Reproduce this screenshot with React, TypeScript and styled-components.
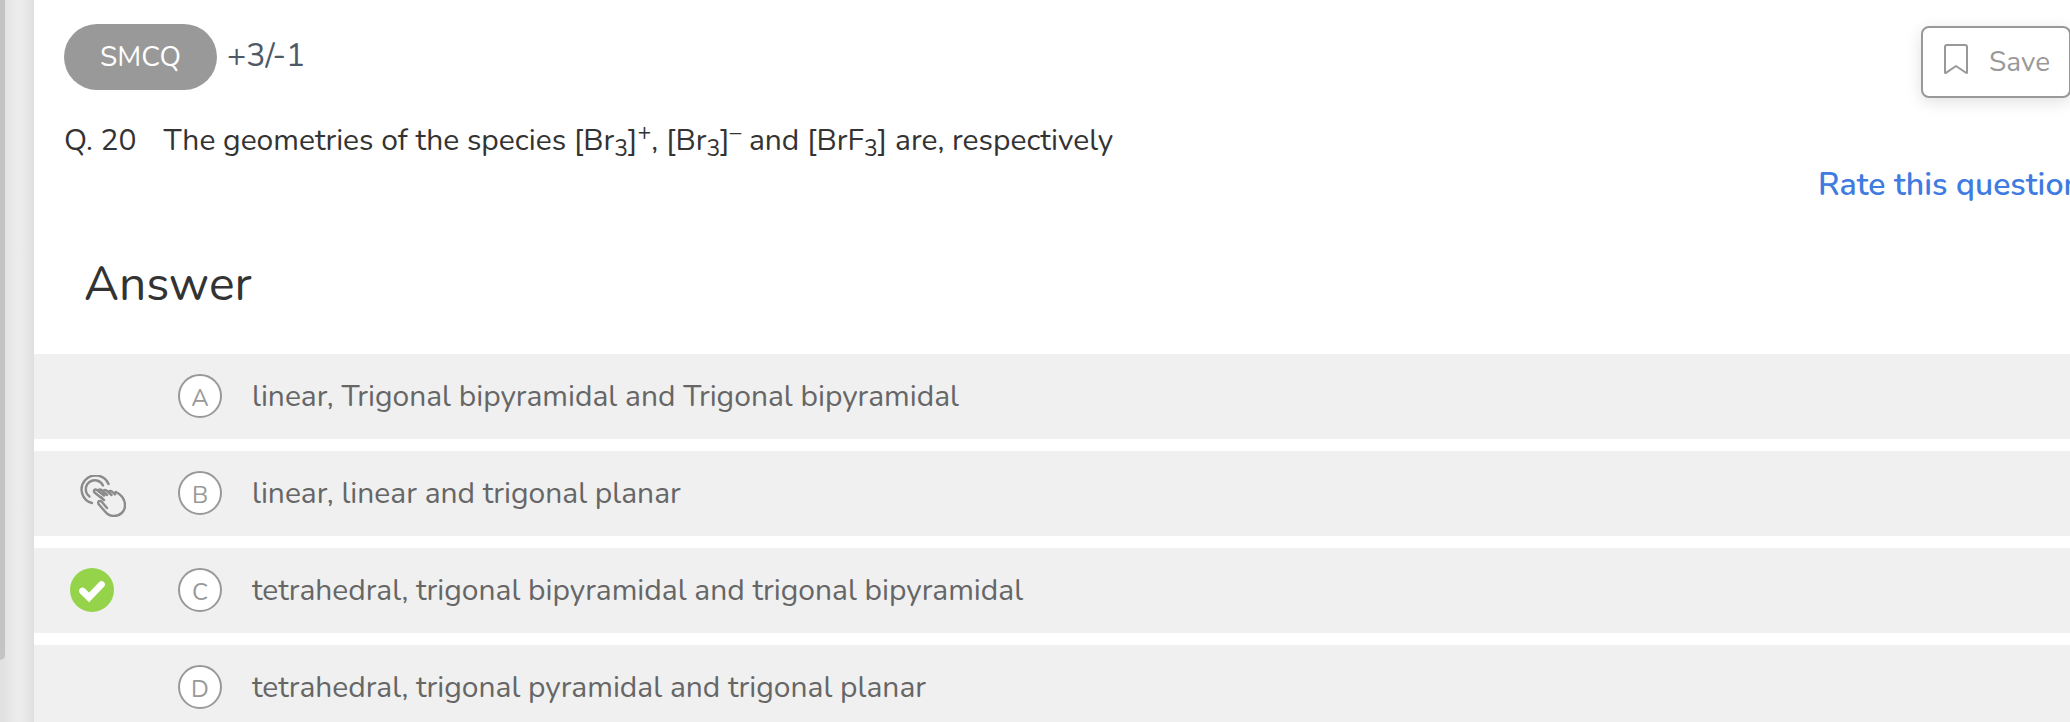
import React from "react";
import styled, { createGlobalStyle } from "styled-components";

const GlobalStyle = createGlobalStyle`
  *, *::before, *::after { box-sizing: border-box; }
  body {
    margin: 0;
    background: #fff;
    color: #333;
    font-family: Nunito, Lato, "Noto Sans", sans-serif;
    font-size: 30px;
    line-height: 40px;
  }
`;

const Page = styled.div`
  display: flex;
  height: 100vh;
  overflow: hidden;
`;

const ScrollTrack = styled.div`
  flex: 0 0 5px;
  background: #e1e1e1;
`;

const ScrollThumb = styled.div`
  height: calc(100% - 62px);
  background: #c4c4c4;
  border-bottom-right-radius: 5px;
`;

const Gutter = styled.div`
  flex: 0 0 29px;
  background: linear-gradient(to right, #e3e3e3, #ececec 45%, #ebebeb 60%, #dfdfdf);
`;

const Panel = styled.main`
  flex: 1;
  min-width: 0;
  overflow: hidden;
`;

const Header = styled.header`
  display: flex;
  justify-content: space-between;
  padding: 24px 0 0 30px;
`;

const Meta = styled.div`
  display: flex;
  align-items: center;
  gap: 10px;
  color: #4d5966;
  font-size: 32px;
`;

const TypePill = styled.span`
  display: flex;
  align-items: center;
  justify-content: center;
  width: 153px;
  height: 66px;
  border-radius: 33px;
  background: #999;
  color: #fff;
  font-size: 28px;
`;

const Marks = styled.span`
  padding-bottom: 2px;
`;

const Question = styled.p`
  display: flex;
  gap: 27px;
  margin: 31px 0 0;

  sub, sup {
    font-size: 23px;
    line-height: 0;
  }
  sub { vertical-align: -6px; }
  sup { vertical-align: 10px; }
`;

const Actions = styled.div`
  display: flex;
  flex: 0 0 252px;
  min-width: 0;
  flex-direction: column;
  align-items: flex-start;
  gap: 67px;
  padding-top: 2px;
`;

const SaveButton = styled.button`
  display: flex;
  flex-shrink: 0;
  align-items: center;
  gap: 21px;
  width: 150px;
  height: 72px;
  margin-left: 103px;
  padding: 0 0 0 21px;
  border: 2px solid #999;
  border-radius: 8px;
  background: #fff;
  box-shadow: 0 4px 16px rgba(0, 0, 0, 0.12);
  color: #999;
  font: inherit;
  font-size: 28px;
`;

const RateLink = styled.a`
  color: #3f7be0;
  font-size: 32px;
  font-weight: 600;
  text-decoration: none;
  white-space: nowrap;
`;

const AnswerTitle = styled.h2`
  margin: 47px 0 38px 50px;
  font-size: 48px;
  font-weight: 400;
  line-height: 64px;
`;

const Options = styled.ul`
  display: flex;
  flex-direction: column;
  gap: 12px;
  margin: 0;
  padding: 0;
  list-style: none;
`;

const Option = styled.li`
  display: grid;
  grid-template-columns: 108px 44px 1fr;
  align-items: center;
  height: 85px;
  padding: 0 0 1px 36px;
  background: #f0f0f0;
  color: #666;
`;

const Status = styled.span<{ $indent?: boolean }>`
  display: flex;
  padding: ${(p) => (p.$indent ? "6px 0 0 10px" : "0")};
`;

const Letter = styled.span`
  display: flex;
  align-items: center;
  justify-content: center;
  width: 44px;
  height: 44px;
  padding-top: 3px;
  border: 2px solid #999;
  border-radius: 50%;
  background: #fff;
  color: #999;
  font-size: 24px;
`;

const OptionText = styled.span`
  padding: 2px 0 0 30px;
`;

const BookmarkIcon = () => (
  <svg width="24" height="36" viewBox="0 0 24 36" fill="none" stroke="#999" strokeWidth="2" strokeLinejoin="round" aria-hidden="true">
    <path d="M3 1h18a2 2 0 0 1 2 2v25.5q0 1-1 .3L12 22 2 28.800q-1 .7-1-.3V3a2 2 0 0 1 2-2z" />
  </svg>
);

const CheckIcon = () => (
  <svg width="44" height="44" viewBox="0 0 44 44" role="img" aria-label="Correct answer">
    <circle cx="22" cy="22" r="22" fill="#95d44a" />
    <path d="M12.500 23 19 29.500 31.500 16.500" fill="none" stroke="#fff" strokeWidth="6.800" strokeLinejoin="miter" strokeLinecap="round" />
  </svg>
);

const TapIcon = () => (
  <svg width="46" height="42" viewBox="0 0 46 42" fill="none" stroke="#8b8b8b" strokeWidth="2.400" strokeLinecap="round" strokeLinejoin="round" role="img" aria-label="Your choice">
    <path d="M12 28A14 14 0 1 1 28.500 9" />
    <path d="M9.500 21.500A9 9 0 1 1 23 10.500" />
    <path d="M24 25 14.500 17.500c-1.500-2 .5-4 2.500-2.500l7 5.500M18 15.500c1-1.500 2.500-1.200 4 0l5 4.500M23 16c1-1.500 3-1.200 4 0l4.500 4M28.500 16.500c1.500-1 3-.5 4 .5l2.500 2.500M34 18.500l2-1.500c6 3 9 8 9 13.500 0 6-5 10.500-11 10.500-4.500 0-7-2-9-4.500L18.500 29c-1-2.500 1-4 3-2.500l5.500 6.500M24 25l-3-3" />
  </svg>
);

type Mark = "chosen" | "correct";

const options: { letter: string; text: string; mark?: Mark }[] = [
  { letter: "A", text: "linear, Trigonal bipyramidal and Trigonal bipyramidal" },
  { letter: "B", text: "linear, linear and trigonal planar", mark: "chosen" },
  { letter: "C", text: "tetrahedral, trigonal bipyramidal and trigonal bipyramidal", mark: "correct" },
  { letter: "D", text: "tetrahedral, trigonal pyramidal and trigonal planar" },
];

export default function App() {
  return (
    <>
      <GlobalStyle />
      <Page>
        <ScrollTrack>
          <ScrollThumb />
        </ScrollTrack>
        <Gutter />
        <Panel>
          <Header>
            <div>
              <Meta>
                <TypePill>SMCQ</TypePill>
                <Marks>+3/-1</Marks>
              </Meta>
              <Question>
                <span>Q. 20</span>
                <span>
                  The geometries of the species [Br<sub>3</sub>]<sup>+</sup>, [Br<sub>3</sub>]<sup>–</sup> and [BrF
                  <sub>3</sub>] are, respectively
                </span>
              </Question>
            </div>
            <Actions>
              <SaveButton type="button">
                <BookmarkIcon />
                Save
              </SaveButton>
              <RateLink href="#rate">Rate this question</RateLink>
            </Actions>
          </Header>
          <AnswerTitle>Answer</AnswerTitle>
          <Options>
            {options.map((o) => (
              <Option key={o.letter}>
                <Status $indent={o.mark === "chosen"}>
                  {o.mark === "chosen" && <TapIcon />}
                  {o.mark === "correct" && <CheckIcon />}
                </Status>
                <Letter>{o.letter}</Letter>
                <OptionText>{o.text}</OptionText>
              </Option>
            ))}
          </Options>
        </Panel>
      </Page>
    </>
  );
}
